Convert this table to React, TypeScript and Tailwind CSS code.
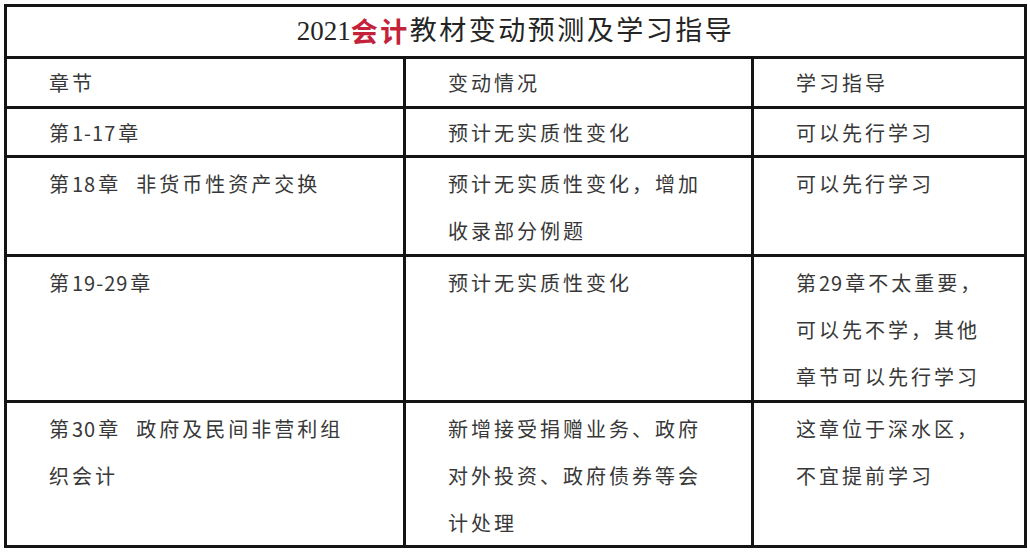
import React from "react";

// digits in the original are set tighter than the CJK text
const Txt: React.FC<{ s: string }> = ({ s }) => {
  const parts = s.split(/(\d+(?:-\d+)?)/);
  return (
    <>
      {parts.map((p, i) =>
        /^\d/.test(p) ? (
          <span key={i} className="tracking-[1px] mr-[2px]">
            {p}
          </span>
        ) : (
          <React.Fragment key={i}>{p}</React.Fragment>
        )
      )}
    </>
  );
};

const rows: string[][][] = [
  [["章节"], ["变动情况"], ["学习指导"]],
  [["第1-17章"], ["预计无实质性变化"], ["可以先行学习"]],
  [
    ["第18章\u00a0\u00a0非货币性资产交换"],
    ["预计无实质性变化，增加", "收录部分例题"],
    ["可以先行学习"],
  ],
  [
    ["第19-29章"],
    ["预计无实质性变化"],
    ["第29章不太重要，", "可以先不学，其他", "章节可以先行学习"],
  ],
  [
    ["第30章\u00a0\u00a0政府及民间非营利组", "织会计"],
    ["新增接受捐赠业务、政府", "对外投资、政府债券等会", "计处理"],
    ["这章位于深水区，", "不宜提前学习"],
  ],
];

const App: React.FC = () => {
  return (
    <div className="w-[1030px] h-[552px] bg-white pt-[4px] pl-[4px]">
      <div className="w-[1023px] grid grid-cols-[396px_345px_270px] grid-rows-[49px_47px_46px_96px_143px_142px] gap-[3px] p-[3px] bg-[#141414] font-['Noto_Sans_CJK_SC',sans-serif] text-[#383838]">
        <div className="col-span-3 bg-white flex items-center justify-center text-[27px] tracking-[2.5px] text-[#242424] font-['Liberation_Serif','Noto_Sans_CJK_SC',serif]">
          <span className="tracking-normal">2021</span>
          <span className="text-[#c4213a] font-bold font-['Noto_Sans_CJK_SC',sans-serif]">
            会计
          </span>
          教材变动预测及学习指导
        </div>
        {rows.map((row, i) =>
          row.map((lines, j) => (
            <div
              key={`${i}-${j}`}
              className={
                i < 2
                  ? "bg-white pl-[42px] text-[20px] leading-[47px] tracking-[3px] whitespace-nowrap overflow-hidden"
                  : "bg-white pl-[42px] pt-[2px] text-[20px] leading-[47px] tracking-[3px] whitespace-nowrap overflow-hidden"
              }
            >
              {lines.map((l, k) => (
                <div key={k}>
                  <Txt s={l} />
                </div>
              ))}
            </div>
          ))
        )}
      </div>
    </div>
  );
};

export default App;
